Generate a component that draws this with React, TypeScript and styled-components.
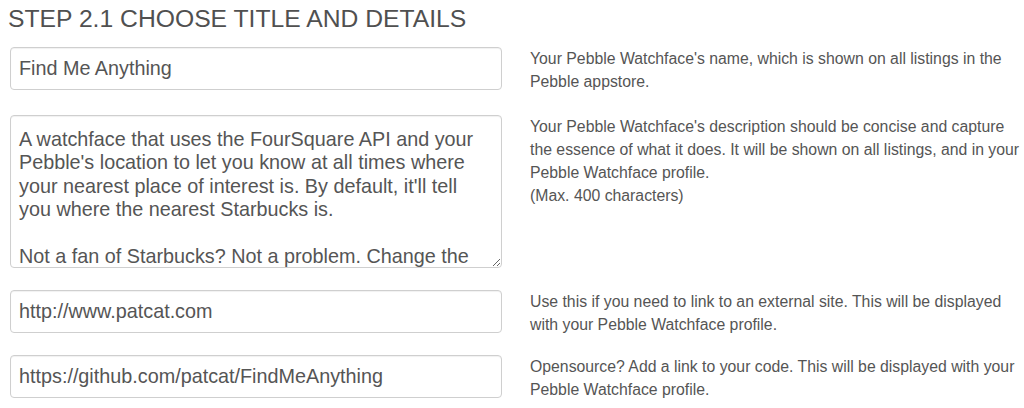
import styled, { createGlobalStyle } from 'styled-components';

const GlobalStyle = createGlobalStyle`
  html, body {
    margin: 0;
    padding: 0;
    background: #fff;
  }
  body {
    font-family: 'Liberation Sans', Arial, Helvetica, sans-serif;
    color: #555;
  }
`;

const Page = styled.div`
  width: 1024px;
  padding-top: 6px;
`;

const Title = styled.h2`
  margin: 0 0 15px 8px;
  font-size: 24.7px;
  line-height: 26px;
  font-weight: normal;
  color: #505050;
`;

const Form = styled.form`
  padding-left: 10px;
`;

const Row = styled.div<{ space: number }>`
  display: grid;
  grid-template-columns: 492px 1fr;
  column-gap: 28px;
  align-items: start;
  margin-bottom: ${(p) => p.space}px;
`;

const Field = styled.input`
  box-sizing: border-box;
  width: 100%;
  height: 43px;
  margin: 0;
  padding: 0 8px;
  border: 1px solid #cfcfcf;
  border-radius: 4px;
  box-shadow: inset 0 1px 1px rgba(0, 0, 0, 0.06);
  font-family: inherit;
  font-size: 19.8px;
  color: #555;
  background: #fff;
  outline: none;
`;

const Area = styled.textarea`
  box-sizing: border-box;
  display: block;
  width: 100%;
  height: 153px;
  margin: 0;
  padding: 12px 8px;
  border: 1px solid #cfcfcf;
  border-radius: 4px;
  box-shadow: inset 0 1px 1px rgba(0, 0, 0, 0.06);
  font-family: inherit;
  font-size: 19.8px;
  line-height: 23.4px;
  color: #555;
  background: #fff;
  outline: none;
  overflow: auto;
  scrollbar-width: none;
  resize: vertical;
`;

const Help = styled.p`
  margin: 0;
  font-size: 15.8px;
  line-height: 23px;
  color: #555;
  white-space: nowrap;
`;

const description = `A watchface that uses the FourSquare API and your
Pebble's location to let you know at all times where
your nearest place of interest is. By default, it'll tell
you where the nearest Starbucks is.

Not a fan of Starbucks? Not a problem. Change the
search term in the settings and find whatever you like.`;

const App = () => (
  <Page>
    <GlobalStyle />
    <Title>STEP 2.1 CHOOSE TITLE AND DETAILS</Title>
    <Form>
      <Row space={22}>
        <Field type='text' defaultValue='Find Me Anything' />
        <Help>
          Your Pebble Watchface's name, which is shown on all listings in the
          <br />
          Pebble appstore.
        </Help>
      </Row>
      <Row space={22}>
        <Area defaultValue={description} spellCheck={false} />
        <Help>
          Your Pebble Watchface's description should be concise and capture
          <br />
          the essence of what it does. It will be shown on all listings, and in your
          <br />
          Pebble Watchface profile.
          <br />
          (Max. 400 characters)
        </Help>
      </Row>
      <Row space={19}>
        <Field type='text' defaultValue='http://www.patcat.com' />
        <Help>
          Use this if you need to link to an external site. This will be displayed
          <br />
          with your Pebble Watchface profile.
        </Help>
      </Row>
      <Row space={0}>
        <Field type='text' defaultValue='https://github.com/patcat/FindMeAnything' />
        <Help>
          Opensource? Add a link to your code. This will be displayed with your
          <br />
          Pebble Watchface profile.
        </Help>
      </Row>
    </Form>
  </Page>
);

export default App;
